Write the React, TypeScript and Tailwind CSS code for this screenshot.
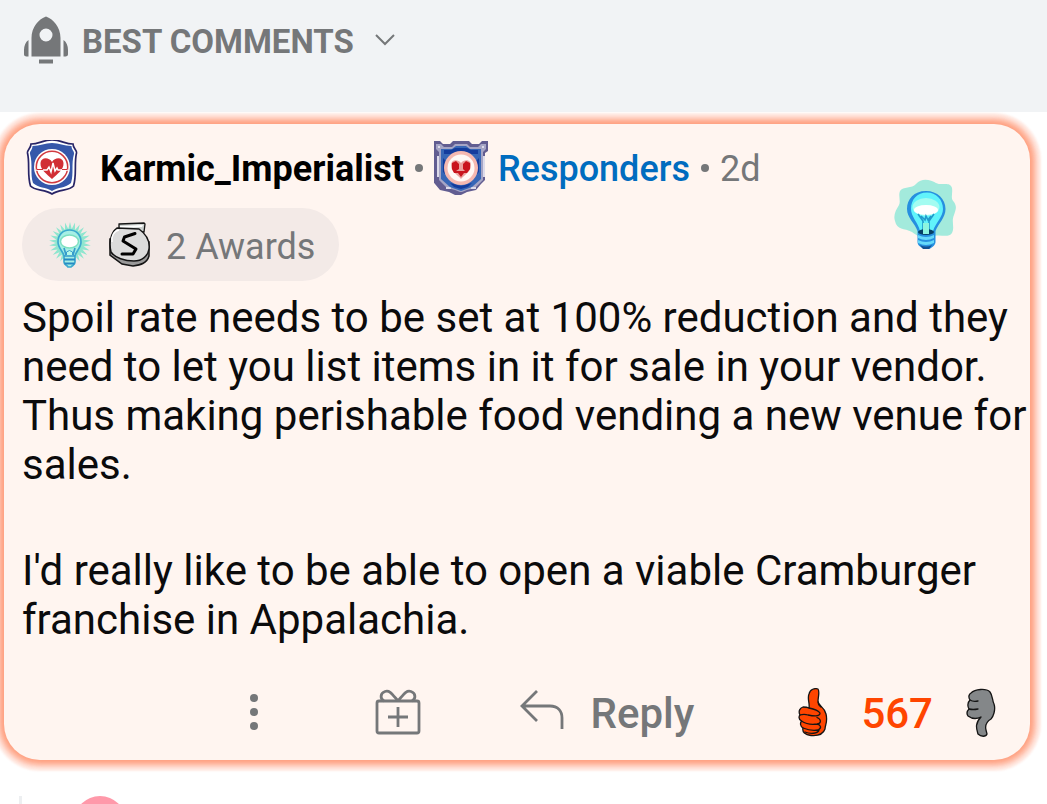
import React from "react";

const RAY_COUNT = 26;
const rayPoints = Array.from({ length: RAY_COUNT * 2 }, (_, i) => {
  const angle = (i * Math.PI) / RAY_COUNT - Math.PI / 2;
  const radius = i % 2 === 0 ? 21 : 14;
  return `${(21 + radius * Math.cos(angle)).toFixed(2)},${(21 + radius * Math.sin(angle)).toFixed(2)}`;
}).join(" ");

function Rocket() {
  return (
    <svg className="h-12 w-[46px] shrink-0" viewBox="0 0 46 48" fill="#757779" aria-hidden="true">
      <path fillRule="evenodd" d="M23 0.500C16 3 8.500 11 8.500 22V40.500H37.500V22C37.500 11 30 3 23 0.500ZM23 12.500a6.500 6.500 0 1 1 0 13a6.500 6.500 0 1 1 0-13Z" />
      <path d="M5.500 24C2.500 26 1 30 1 34v4c0 2 1 2.500 4.500 2.500ZM40.500 24c3 2 4.500 6 4.500 10v4c0 2-1 2.500-4.500 2.500Z" />
      <path d="M16 43.500h14v4H16z" />
    </svg>
  );
}

function Shield() {
  return (
    <svg className="h-14 w-[52px] shrink-0" viewBox="0 0 52 56" aria-hidden="true">
      <path d="M5 3C13 3 17 -1 26 -1s13 4 21 4c0 4 4 6 3.500 9C48 22 51 34 47.500 45C43 50 33 48 26 53C19 48 9 50 4.500 45C1 34 4 22 1.500 12C1 9 5 7 5 3Z" fill="#fff" stroke="#282466" strokeWidth="1.700" transform="translate(0 1)" />
      <path d="M6.500 6C14 6 19 3 26 3s12 3 19.500 3c0 4 3 5 2.500 8C45 24 48 34 45 43C40 48 32 47 26 51C20 47 12 48 7 43C4 34 7 24 4 14C3.500 11 6.500 10 6.500 6Z" fill="#3658aa" />
      <circle cx="26" cy="27" r="18" fill="#fff" />
      <circle cx="26" cy="27" r="15.700" fill="#fff" stroke="#d13b40" strokeWidth="1.500" />
      <path d="M26 39C21 34 14 30 14.500 23C15 17 23 17 26 22C29 17 37 17 37.500 23C38 30 31 34 26 39Z" fill="#d12f35" />
      <path d="M10 30h11l2-3 2 5 2-9 2 8 2-3 1 2h10" fill="none" stroke="#fff" strokeWidth="1.500" />
      <path d="M10.500 29.500H17M36 29.500h5.500" stroke="#d12f35" strokeWidth="1" />
    </svg>
  );
}

function PixelShield() {
  return (
    <svg className="h-[54px] w-[54px] shrink-0" viewBox="0 0 54 54" aria-hidden="true">
      <path d="M0 0h6l3 3h7l3-3h16l3 3h7l3-3h6v10l-3 2v27l-4 4-5 6-9 2-6 3h-6l-6-3-9-2-5-6-3-4V12l-1-2Z" fill="#625d91" />
      <path d="M2 3h5l3 3h8l3-3h12l3 3h8l3-3h5v5l-3 3v28l-8 8-8 2-5 2h-2l-5-2-8-2-8-8V11L2 8Z" fill="#a6a5c5" />
      <path d="M4 6h2M48 6h2M4 15v21M50 15v21M12 47h5M37 47h5" stroke="#dddbea" strokeWidth="2" />
      <path d="M7 8h11l4-3h10l4 3h11v30l-9 8-11 4-11-4-9-8Z" fill="#3766b6" />
      <path d="M10 9h7l4-2h12l4 2h7v4H33l-6-2-6 2H10ZM9 17l3 3v14l-3-3ZM45 17l-3 3v14l3-3ZM16 42l11 3 11-3-4 4-7 2-7-2Z" fill="#143c9d" />
      <circle cx="27" cy="27" r="17" fill="#f5b8b0" />
      <circle cx="27" cy="27" r="13.500" fill="#fff8f5" />
      <path d="M27 38C23 33 17 31 17 24C17 18 24 18 27 22C30 18 37 18 37 24C37 31 31 33 27 38Z" fill="#eba19e" />
      <path d="M27 36l-3-4h-4l-2-4v-6l4-2 3 3v5l-3 2h9l-2-2v-5l3-3 4 2v6l-3 4h-3Z" fill="#c9141d" />
    </svg>
  );
}

function AwardBulb() {
  return (
    <svg className="h-[74px] w-16" viewBox="0 0 64 74" role="img" aria-label="Illuminating award">
      <path d="M7 12c3-5 12-2 16-7c6-7 15-4 20-1c6 3 14-2 16 5c1 6-2 10 2 14c3 5 2 7 0 13c-3 7 1 12-2 18c-4 6-13 0-20 4c-9 4-14-1-20-5C11 49 4 51 2 42c-2-6 1-11 4-16c2-4-1-9 1-14Z" fill="#a3eadc" />
      <path d="M33 12C21 12 14 20 14 30c0 9 8 14 10.500 22v11c0 4 4 5 6 7h6c3-2 6-4 6-7V52c3-8 10-13 10-22c0-10-8-18-19.500-18Z" fill="#268fdf" />
      <path d="M34 13.500c-10 0-16 7-16 16.500c0 8 7 13 9 22h13C43 43 50 38 50 30c0-9.500-7-16.500-16-16.500Z" fill="#61f3fb" />
      <ellipse cx="33" cy="28" rx="13.500" ry="9" fill="#a3fcf1" />
      <ellipse cx="33" cy="31" rx="12" ry="5" fill="#fff" />
      <path d="m25 35 5 7v13M41 35l-5 7v13M28 37l4 4 1-4 2 4 3-4" fill="none" stroke="#219acc" strokeWidth="1.600" />
      <ellipse cx="33" cy="53" rx="8" ry="3" fill="#073f65" />
      <path d="M30 44h6v11h-6z" fill="#8df5df" />
      <path d="M25 56q8 4 16 0v3q-8 4-16 0ZM25 61q8 4 16 0v3q-8 4-16 0Z" fill="#65d9fa" />
      <path d="M27 66q6 3 12 0l-3 4h-6Z" fill="#134f91" />
    </svg>
  );
}

function RayBulb() {
  return (
    <svg className="h-[46px] w-[42px] shrink-0" viewBox="0 0 42 46" aria-hidden="true">
      <polygon points={rayPoints} fill="#8fe6cf" />
      <path d="M20.500 8C13.500 8 9 13 9 20c0 6 5 9 6 14v6c0 3 3 3 4 5h3c2-2 4-2 4-5v-6c1-5 6-8 6-14c0-7-4.500-12-11.500-12Z" fill="#a6efe5" stroke="#3ba9ce" strokeWidth="1.700" />
      <ellipse cx="20.500" cy="19.500" rx="9" ry="6.500" fill="#fff" stroke="#7de0c0" strokeWidth="1.500" />
      <path d="m15 26 2 7M26 26l-2 7M15 34h11" fill="none" stroke="#369ccc" strokeWidth="1.700" />
      <path d="M17.500 33v-3q3-3 6 0v3" fill="#b6f9e9" stroke="#369ccc" />
      <path d="M15 37.500h11M15.500 41.500h10" stroke="#258ac3" strokeWidth="2" />
    </svg>
  );
}

function SilverAward() {
  return (
    <svg className="h-[46px] w-[42px] shrink-0" viewBox="0 0 42 46" stroke="#151515" aria-hidden="true">
      <path d="m10 2 25-1 1 1-1 8-25-2Z" fill="#cbd0ce" strokeWidth="1.300" />
      <path d="m11 4 23-1-1 2-22 1Z" fill="#fff" stroke="none" />
      <path d="M1 17v16l12 9 11 2c8-1 14-3 16-10V20Z" fill="#999" strokeWidth="1.500" />
      <path d="M8 6l22 1c7 5 11 12 10 20c-1 7-7 12-15 12c-9 0-19-3-23-9C0 22 1 11 8 6Z" fill="#dcdcdc" strokeWidth="1.500" />
      <path d="M3 20c-1-6 2-11 7-12" fill="none" stroke="#fff" strokeWidth="1.500" />
      <path d="M26 11.500 15.500 15 14 19l13 8-3 5H13" fill="none" stroke="#000" strokeWidth="3" strokeLinecap="round" strokeLinejoin="round" />
    </svg>
  );
}

function ThumbUp() {
  return (
    <svg className="h-[49px] w-[30px]" viewBox="0 0 30 49" fill="#ff4500" stroke="#151515" strokeWidth="1.300" strokeLinecap="round" strokeLinejoin="round" aria-hidden="true">
      <path d="M11 20C12 15 9 11 11 6C12 1 17 0 20 1C22 4 20 9 20 13C20 18 26 18 28 26C30 34 27 37 27 41C25 47 19 48 13 47.500C7 47 4 44 5 40C2 38 2 35 3.500 33C0 31 1 28 2 27C0 23 2 20 5 19C8 19 9 19 11 20Z" />
      <path d="M11 20C16 21 20 22 22 25C22 29 15 28 10 27C7 26 5 26 2 27M3.500 33C8 36 13 37 19 36C24 35 23 31 19 29.500M5 40C10 42 15 43 20 42C24 40 23 37 19 36M7 44C12 46 20 46 21 42M20 14C20 17 22 18 23 19" fill="none" />
    </svg>
  );
}

function ThumbDown() {
  return (
    <svg className="h-[49px] w-[30px]" viewBox="0 0 30 49" fill="#848789" stroke="#151515" strokeWidth="1.300" strokeLinecap="round" strokeLinejoin="round" aria-hidden="true">
      <path d="M5 5C9 1 20 0 24 4C27 8 26 12 28 16C30 22 27 29 25 31C20 34 19 38 20 42L21 46C20 49 15 49 12 46C11 42 8 36 15 29C11 31 6 31 2 28C0 25 1 23 3 21C1 18 2 14 4 12C2 9 3 6 5 5Z" />
      <path d="M4 12Q7 14 12 13M3 21Q7 22 12 21" fill="none" />
    </svg>
  );
}

export default function App() {
  return (
    <main className="overflow-hidden bg-white font-['Roboto',sans-serif] text-[#757779]">
      <header className="h-28 bg-[#f1f3f5] px-[23px] pt-4">
        <button type="button" className="flex h-12 items-center">
          <Rocket />
          <span className="ml-[13px] pt-1 text-[33px] leading-10 font-bold">BEST COMMENTS</span>
          <svg className="ml-[21px] h-3 w-5" viewBox="0 0 20 12" fill="none" stroke="currentColor" strokeWidth="2" aria-hidden="true"><path d="m1 1 9 9 9-9" /></svg>
        </button>
      </header>

      <article className="relative mt-3 mr-[17px] ml-1 rounded-[36px] bg-[#fff5f0] pt-3 pb-[22px] pl-[18px] shadow-[0_0_4px_2px_#ff703f59,0_0_4px_5px_#ff703f4d,0_0_4px_8px_#ff703f33,0_0_2px_11px_#ff703f1a]">
        <div className="flex h-16 items-center pl-1 text-[36px]">
          <Shield />
          <a href="#user" className="ml-[22px] pt-0.5 font-bold text-black">Karmic_Imperialist</a>
          <span className="mx-[11px] h-2 w-2 rounded-full bg-[#757779]" />
          <PixelShield />
          <a href="#responders" className="ml-[10px] pt-0.5 font-medium text-[#006cbf]">Responders</a>
          <span className="mx-[11px] h-2 w-2 rounded-full bg-[#757779]" />
          <time className="pt-0.5">2d</time>
        </div>
        <div className="absolute top-[55px] right-[73px]"><AwardBulb /></div>
        <button type="button" className="mt-2 flex h-[73px] items-center rounded-full bg-[#f3eae7] pr-6 pl-[27px] text-[36px]">
          <RayBulb />
          <span className="ml-[18px]"><SilverAward /></span>
          <span className="ml-[15px] pt-1">2 Awards</span>
        </button>
        <div className="mt-3 text-[42px] leading-[49px] text-[#0b0b0c]">
          <p>Spoil rate needs to be set at 100% reduction and they need to let you list items in it for sale in your vendor. Thus making perishable food vending a new venue for sales.</p>
          <p className="mt-[57px] pr-8">I'd really like to be able to open a viable Cramburger franchise in Appalachia.</p>
        </div>
        <div className="mt-[42px] flex h-[52px] items-center justify-end pr-[34px] text-[42px] font-medium">
          <button type="button" aria-label="More options" className="mr-[117px]">
            <svg className="h-9 w-2" viewBox="0 0 8 36" fill="#757779"><circle cx="4" cy="4" r="4" /><circle cx="4" cy="18" r="4" /><circle cx="4" cy="32" r="4" /></svg>
          </button>
          <button type="button" aria-label="Give award" className="mr-[99px]">
            <svg className="h-[46px] w-[46px]" viewBox="0 0 46 46" fill="none" stroke="#757779" strokeWidth="2.800">
              <rect x="2" y="12" width="42" height="32" rx="2" /><path d="M23 18v20M13 28h20M23 12C17 5 15 1 10 2.500C5 4 5 10 9 12M23 12C29 5 31 1 36 2.500C41 4 41 10 37 12" />
            </svg>
          </button>
          <button type="button" className="mr-[104px] flex items-center">
            <svg className="mt-[-5px] mr-[27px] h-10 w-11" viewBox="0 0 44 40" fill="none" stroke="#757779" strokeWidth="2.800"><path d="M17 1 2 16l15 15M2 16h28c8 0 12 5 12 12v11" /></svg>
            <span className="pt-0.5">Reply</span>
          </button>
          <button type="button" aria-label="Upvote"><ThumbUp /></button>
          <span className="mx-[33px] pt-0.5 text-[#ff4500]">567</span>
          <button type="button" aria-label="Downvote"><ThumbDown /></button>
        </div>
      </article>

      <section aria-label="Next comment" className="mt-9 flex h-2 items-start overflow-hidden pl-[19px]">
        <span className="h-2 w-[3px] bg-[#edeff1]" />
        <span className="ml-[52px] h-[52px] w-[52px] shrink-0 rounded-full bg-[#ff99aa]" />
      </section>
    </main>
  );
}
